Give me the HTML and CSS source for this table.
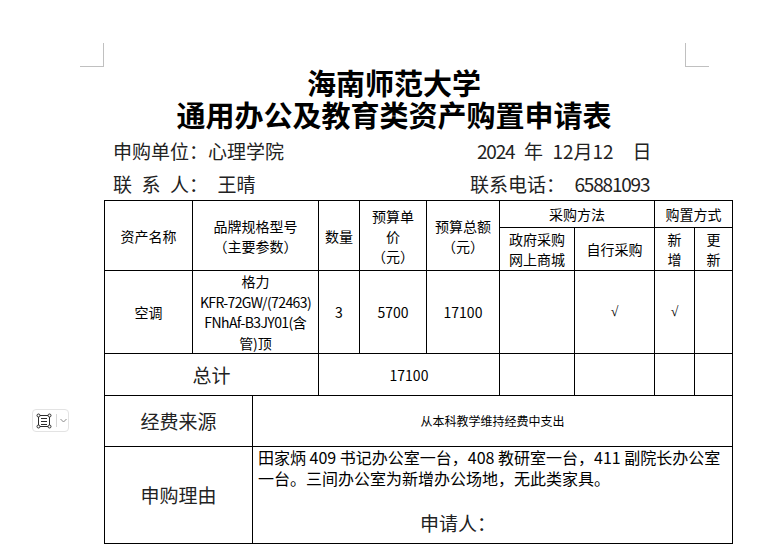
FILE: index.html
```html
<!DOCTYPE html>
<html lang="zh-CN">
<head>
<meta charset="utf-8">
<title>海南师范大学 通用办公及教育类资产购置申请表</title>
<link rel="stylesheet" href="styles.css">
</head>
<body>
<div class="page">
  <div class="marks"><span class="mark mark-l"></span><span class="mark mark-r"></span></div>
  <h1 class="title"><span>海南师范大学</span><span>通用办公及教育类资产购置申请表</span></h1>
  <div class="info">
    <div class="info-row"><span class="info-left info-left--unit">申购单位：心理学院</span><span class="info-right"><span class="num">2024</span>&ensp;年&ensp;12月12&ensp;&ensp;日</span></div>
    <div class="info-row"><span class="info-left info-left--contact">联&ensp;系&ensp;人：&ensp;王晴</span><span class="info-right">联系电话：&ensp;<span class="num">65881093</span></span></div>
  </div>
  <table class="grid">
    <colgroup>
      <col class="c-name"><col class="c-brand"><col class="c-qty"><col class="c-unit"><col class="c-total"><col class="c-gov"><col class="c-self"><col class="c-new"><col class="c-upd">
    </colgroup>
    <tr class="r-h1">
      <th rowspan="2">资产名称</th>
      <th rowspan="2">品牌规格型号<br>（主要参数）</th>
      <th rowspan="2">数量</th>
      <th rowspan="2">预算单<br>价<br>（元）</th>
      <th rowspan="2">预算总额<br>（元）</th>
      <th colspan="2">采购方法</th>
      <th colspan="2">购置方式</th>
    </tr>
    <tr class="r-h2">
      <th>政府采购<br>网上商城</th>
      <th>自行采购</th>
      <th>新<br>增</th>
      <th>更<br>新</th>
    </tr>
    <tr class="r-data">
      <td>空调</td>
      <td class="brand">格力<br><span class="latin">KFR-72GW/(72463)</span><br><span class="latin">FNhAf-B3JY01(</span>含<br>管)顶</td>
      <td>3</td>
      <td>5700</td>
      <td>17100</td>
      <td></td>
      <td class="check">√</td>
      <td class="check">√</td>
      <td></td>
    </tr>
    <tr class="r-total">
      <td colspan="2" class="big">总计</td>
      <td colspan="3">17100</td>
      <td></td><td></td><td></td><td></td>
    </tr>
  </table>
  <table class="grid2">
    <colgroup><col class="c-label"><col class="c-content"></colgroup>
    <tr class="r-fund">
      <td class="big">经费来源</td>
      <td class="fund">从本科教学维持经费中支出</td>
    </tr>
    <tr class="r-reason">
      <td class="big">申购理由</td>
      <td class="reason">
        <div class="reason-line">田家炳 409 书记办公室一台，408 教研室一台，411 副院长办公室</div>
        <div class="reason-line">一台。三间办公室为新增办公场地，无此类家具。</div>
        <div class="applicant">申请人：</div>
      </td>
    </tr>
  </table>
  <div class="layout-btn">
    <svg class="layout-icon" width="16" height="16" viewBox="0 0 16 16" aria-hidden="true">
      <rect x="2.5" y="2.5" width="11" height="11" fill="none" stroke="#2b2b2b" stroke-width="1"/>
      <line x1="5" y1="5.5" x2="11" y2="5.5" stroke="#2b2b2b" stroke-width="1"/>
      <line x1="5" y1="8.5" x2="11" y2="8.5" stroke="#2b2b2b" stroke-width="1"/>
      <line x1="5" y1="11.5" x2="11" y2="11.5" stroke="#2b2b2b" stroke-width="1"/>
      <circle cx="2.5" cy="2.5" r="1.5" fill="#fff" stroke="#2b2b2b" stroke-width="1"/>
      <circle cx="13.5" cy="2.5" r="1.5" fill="#fff" stroke="#2b2b2b" stroke-width="1"/>
      <circle cx="2.5" cy="13.5" r="1.5" fill="#fff" stroke="#2b2b2b" stroke-width="1"/>
      <circle cx="13.5" cy="13.5" r="1.5" fill="#fff" stroke="#2b2b2b" stroke-width="1"/>
    </svg>
    <span class="layout-divider"></span>
    <svg class="layout-chevron" width="7" height="5" viewBox="0 0 7 5" aria-hidden="true">
      <polyline points="0.5,1 3.5,4 6.5,1" fill="none" stroke="#8a8a8a" stroke-width="1"/>
    </svg>
  </div>
</div>
</body>
</html>
```

FILE: styles.css
```css
* { box-sizing: border-box; }
html, body { margin: 0; padding: 0; background: #fff; }
body {
  font-family: "Noto Sans CJK SC", "Noto Sans", sans-serif;
  color: #000;
}
.page {
  position: relative;
  width: 776px;
  height: 544px;
  overflow: hidden;
}
.marks {
  display: flex;
  justify-content: space-between;
  padding: 43px 67px 0 80px;
}
.mark {
  width: 24px;
  height: 24px;
  border: 0 solid #c0c0c0;
  border-bottom-width: 1px;
}
.mark-l { border-right-width: 1px; }
.mark-r { border-left-width: 1px; }

.title {
  margin: -1px 91px 0 103px;
  font-size: 29px;
  line-height: 32px;
  font-weight: 700;
  text-align: center;
}
.title span { display: block; }

.info {
  margin-top: 4px;
  font-size: 19px;
  line-height: 33px;
  color: #222;
}
.info-row {
  display: flex;
  padding-left: 113px;
  white-space: nowrap;
}
.info-left--unit { width: 364px; }
.info-left--contact { width: 357px; }
.num { letter-spacing: -1.2px; }

.grid, .grid2 {
  border-collapse: collapse;
  table-layout: fixed;
  width: 628px;
  margin-left: 104px;
}
.grid th, .grid td, .grid2 td {
  border: 1px solid #000;
  padding: 0 3px;
  text-align: center;
  vertical-align: middle;
  font-size: 14px;
  line-height: 20px;
  font-weight: 400;
  color: #000;
}
.c-name { width: 88px; }
.c-brand { width: 126px; }
.c-qty { width: 41px; }
.c-unit { width: 67px; }
.c-total { width: 73px; }
.c-gov { width: 75px; }
.c-self { width: 80px; }
.c-new { width: 40px; }
.c-upd { width: 38px; }
.r-h1 { height: 27px; }
.r-h2 { height: 43px; }
.r-data { height: 83px; }
.r-data td { line-height: 20.5px; }
.grid td.brand { white-space: nowrap; padding: 0; }
.latin { letter-spacing: -0.6px; }
.r-total { height: 42px; }
.check {
  font-family: "Liberation Serif", serif;
  font-size: 15px;
}
.grid td.big, .grid2 td.big {
  font-size: 19px;
  color: #222;
}

.grid2 tr:first-child td { border-top: 0; }
.c-label { width: 148px; }
.c-content { width: 480px; }
.r-fund { height: 50px; }
.r-reason { height: 97px; }
.grid2 td.fund { font-size: 12px; }
.grid2 td.reason {
  vertical-align: top;
  text-align: left;
  padding: 0 5px;
  font-size: 16px;
  line-height: 21px;
  white-space: nowrap;
}
.applicant {
  margin-top: 20px;
  padding-left: 162px;
  font-size: 19px;
  line-height: 28px;
  color: #222;
}

.layout-btn {
  position: absolute;
  left: 32px;
  top: 409px;
  width: 37px;
  height: 23px;
  border: 1px solid #e3e3e3;
  border-radius: 4px;
  background: #fff;
  display: flex;
  align-items: center;
  padding-left: 3px;
}
.layout-icon { display: block; }
.layout-divider {
  width: 1px;
  height: 13px;
  background: #d6d6d6;
  margin-left: 4px;
}
.layout-chevron { display: block; margin-left: 3px; }
```
